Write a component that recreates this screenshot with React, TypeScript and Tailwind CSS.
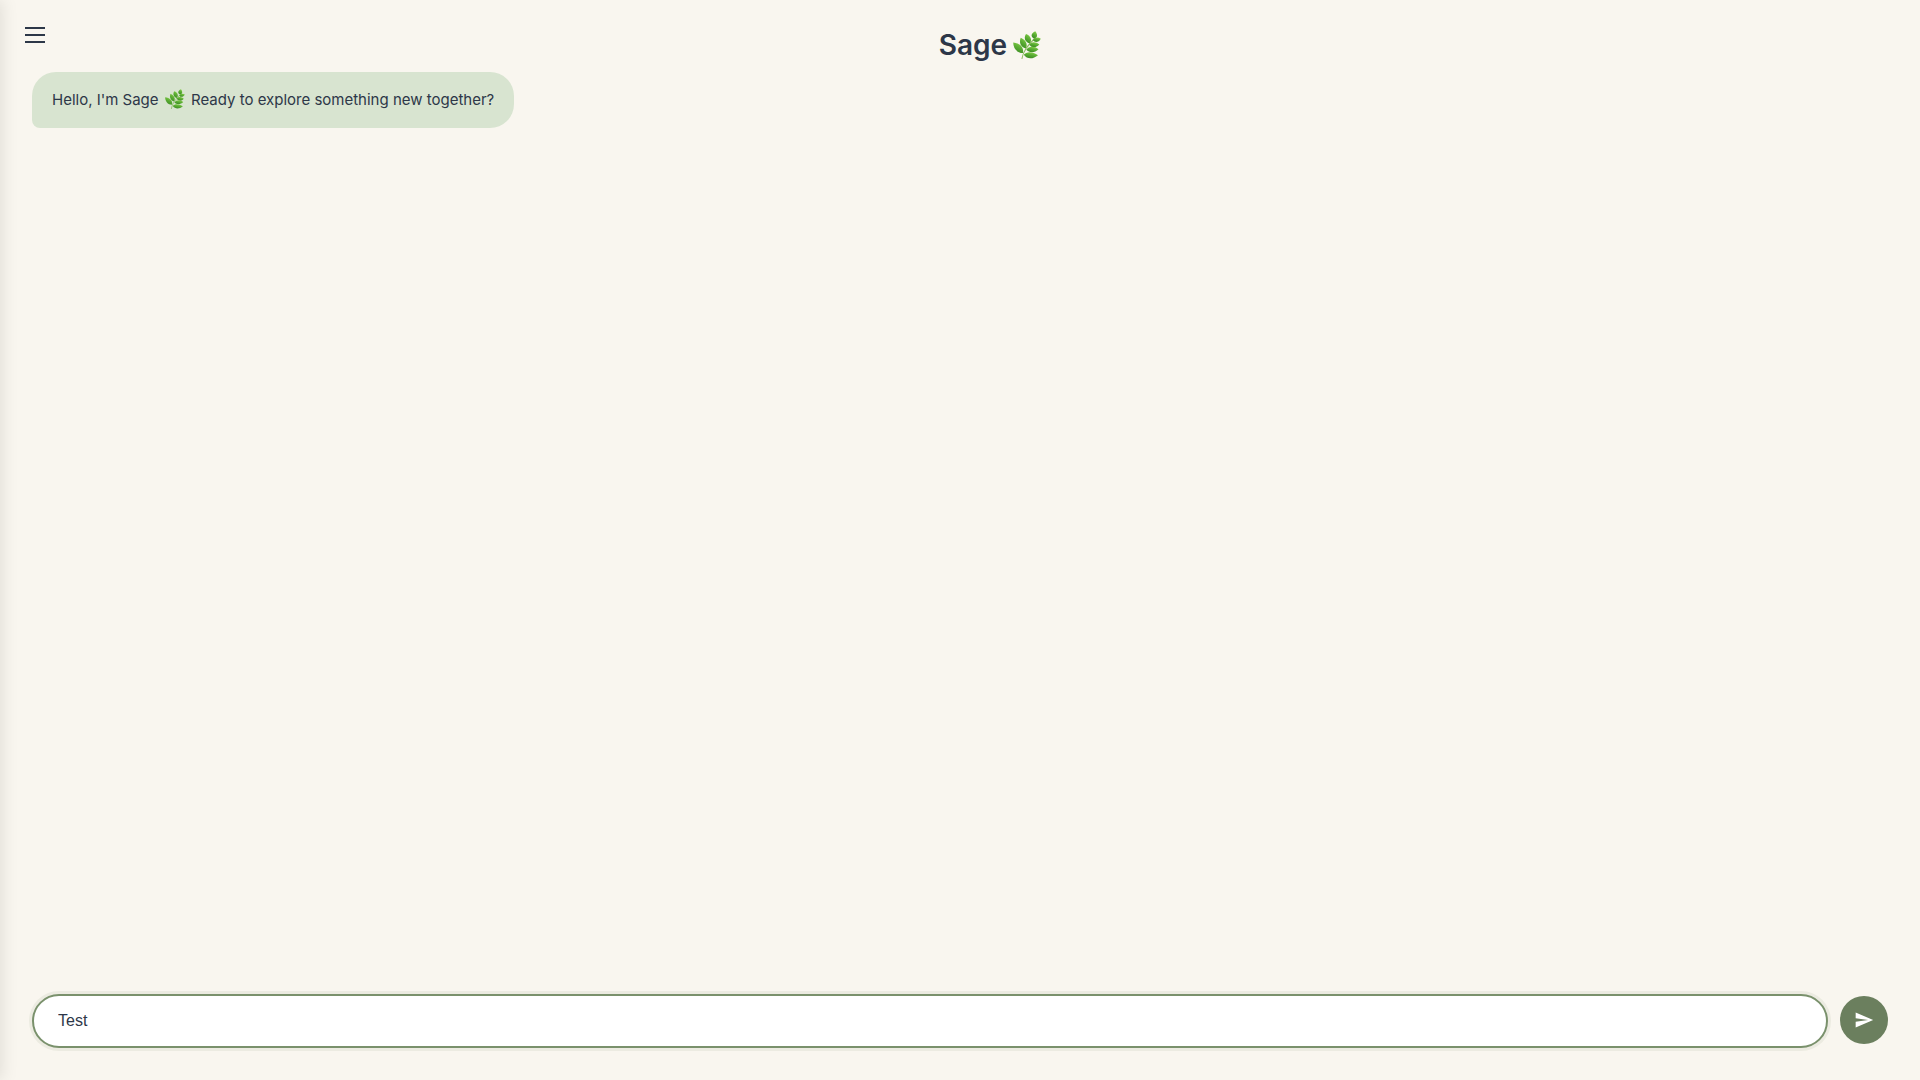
import { useState } from "react";

function Herb({ className }: { className: string }) {
  return (
    <svg viewBox="0 0 28 28" className={className} role="img" aria-label="herb">
      <defs>
        <linearGradient id="leaf" x1="0.7" y1="0" x2="0.3" y2="1">
          <stop offset="0" stopColor="#86d048" />
          <stop offset="0.5" stopColor="#58aa32" />
          <stop offset="1" stopColor="#3a8a22" />
        </linearGradient>
      </defs>
      <path d="M9 27.500C10 20 15 14.500 22 7" fill="none" stroke="#8fbb62" strokeWidth="1.1" strokeLinecap="round" />
      <g fill="url(#leaf)">
        <path d="M21.500 7.500C17 6 18 2 22.300 .2C25 3.500 24.500 6.500 21.500 7.500Z" />
        <path d="M16.700 12.500C11 10.500 11 6 13 3C18 5 19.300 9 16.700 12.500Z" />
        <path d="M12.800 17.500C7.200 16 6 11 7.700 6.700C13 9 15 13.500 12.800 17.500Z" />
        <path d="M10 22C3.500 22 .3 17 .2 11.500C6.500 12 11 16 10 22Z" />
        <path d="M20 9.300C21 6 25 5.800 27.800 7.800C25.700 11.500 22 12 20 9.300Z" />
        <path d="M16.300 13.800C18 10.300 23 10.500 26.300 13.500C23 17.200 18.700 17.200 16.300 13.800Z" />
        <path d="M13.300 18.800C15.500 14.800 21.700 14.900 25.500 18.200C22 22 16.500 22.200 13.300 18.800Z" />
        <path d="M10.800 23.800C13.500 20 20 20.500 25 24.200C20 28.500 14 28.300 10.800 23.800Z" />
      </g>
    </svg>
  );
}

export default function App() {
  const [text, setText] = useState("Test");
  return (
    <div className="flex h-screen flex-col overflow-hidden bg-[#f9f6ef] font-['Inter',sans-serif] text-[#2d3748]">
      <aside aria-hidden="true" className="fixed inset-y-0 -left-75 w-75 shadow-[2px_0_16px_rgba(0,0,0,0.1)]" />
      <header className="flex h-18 items-start">
        <button type="button" aria-label="Open menu" className="ml-5 mt-5 flex h-[30px] w-[30px] flex-col items-center justify-center gap-[5px]">
          <span className="h-[2px] w-5 bg-[#2d3748]" />
          <span className="h-[2px] w-5 bg-[#2d3748]" />
          <span className="h-[2px] w-5 bg-[#2d3748]" />
        </button>
        <h1 className="ml-[10px] flex flex-1 items-center justify-center gap-[6px] pt-6 text-[28px] leading-[42px] font-semibold">
          Sage <Herb className="size-7" />
        </h1>
      </header>
      <main className="flex flex-1 flex-col items-start px-8">
        <p className="rounded-3xl rounded-bl-lg bg-[#d8e4d0] px-5 py-4 text-[15px] leading-6">
          Hello, I'm Sage <Herb className="mx-[2px] inline size-5 align-[-4px]" /> Ready to explore something new together?
        </p>
      </main>
      <form onSubmit={(e) => e.preventDefault()} className="flex items-start gap-3 p-8">
        <input
          aria-label="Message"
          value={text}
          onChange={(e) => setText(e.target.value)}
          className="h-[54px] min-w-0 flex-1 rounded-full border-2 border-[#7a916c] bg-white px-6 font-['Liberation_Sans',sans-serif] text-base shadow-[0_0_0_3px_#ecebe1] outline-none"
        />
        <button type="submit" aria-label="Send" className="mt-[2px] flex size-12 items-center justify-center rounded-full bg-[#6b7f5e] text-white">
          <svg viewBox="0 0 24 24" className="size-5" fill="currentColor">
            <path d="M2.010 21L23 12 2.010 3 2 10l15 2-15 2z" />
          </svg>
        </button>
      </form>
    </div>
  );
}
